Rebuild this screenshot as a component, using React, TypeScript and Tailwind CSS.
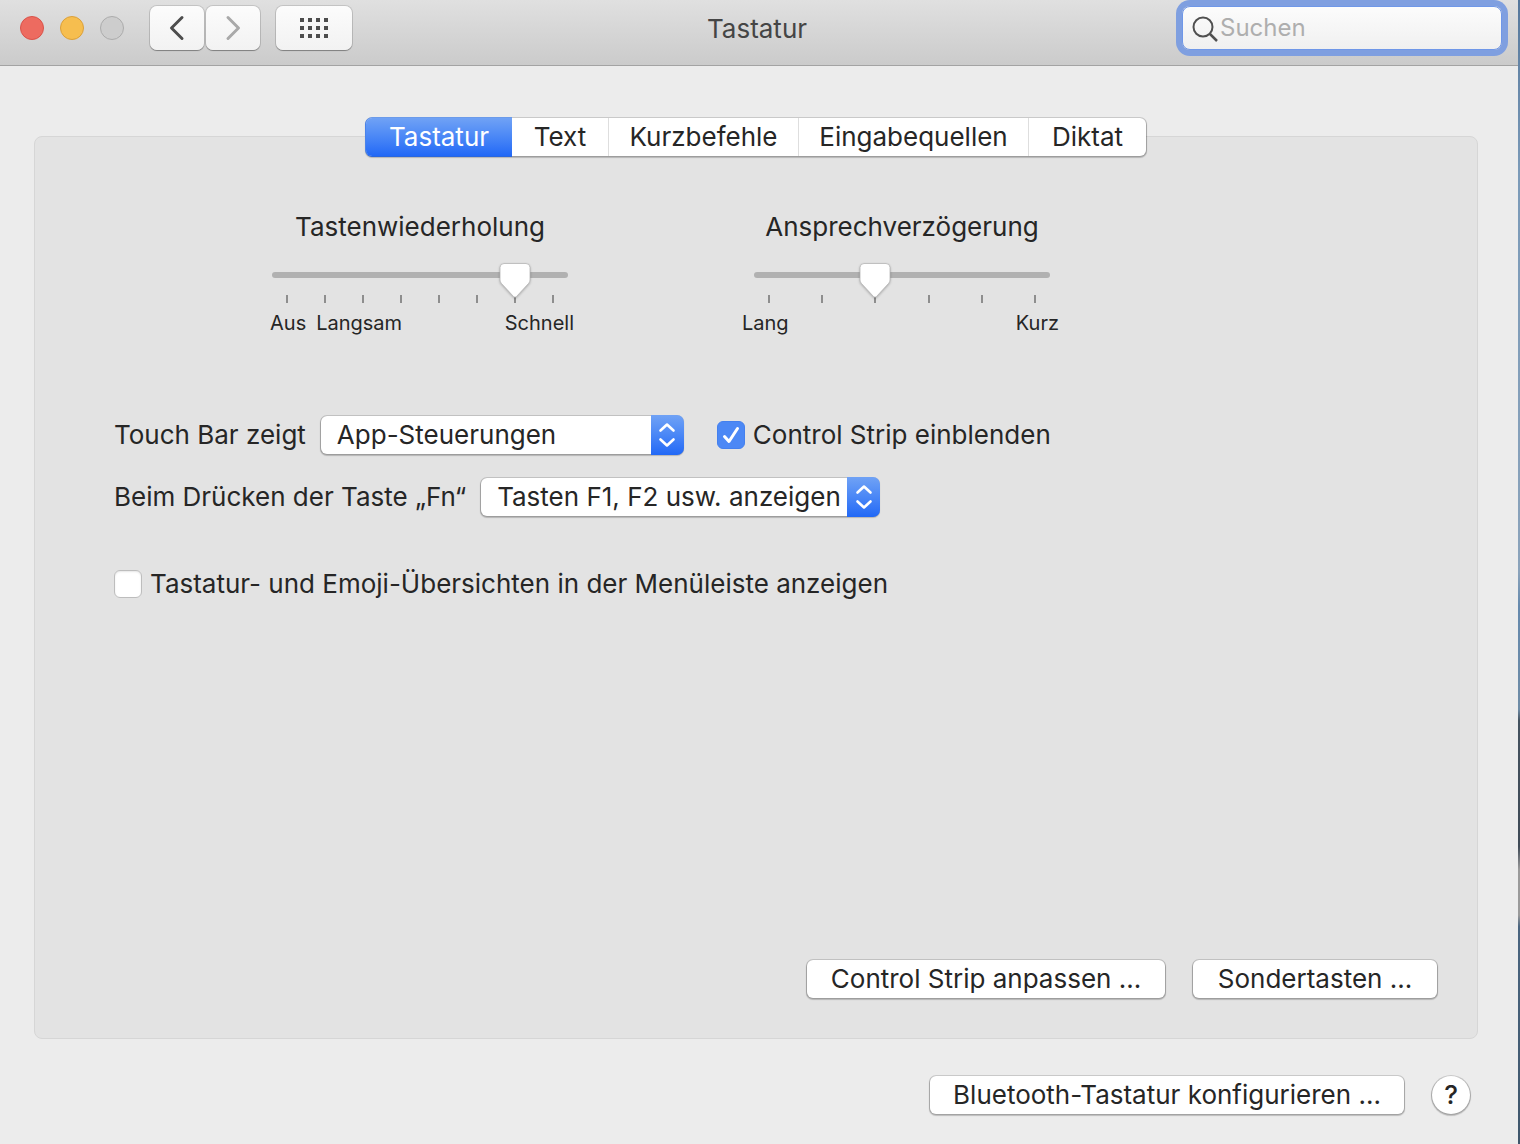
import { useState } from "react";
import type { ReactNode } from "react";

const tabs = [
  { label: "Tastatur", width: "w-[146px]" },
  { label: "Text", width: "w-[97px]" },
  { label: "Kurzbefehle", width: "w-[190px]" },
  { label: "Eingabequellen", width: "w-[230px]" },
  { label: "Diktat", width: "w-[117px]" },
];

const raised =
  "bg-white shadow-[0_0_0_1px_rgba(0,0,0,0.13),0_1px_1px_1px_rgba(0,0,0,0.2)]";

function ToolbarButton({ label, className, children }: { label: string; className: string; children: ReactNode }) {
  return (
    <button
      aria-label={label}
      className={`flex h-11 items-center justify-center rounded-[7px] bg-gradient-to-b from-[#fcfcfc] to-[#f2f2f2] shadow-[0_0_0_1px_rgba(0,0,0,0.12),0_1px_1px_rgba(0,0,0,0.3)] ${className}`}
    >
      {children}
    </button>
  );
}

function Toolbar() {
  return (
    <header className="grid h-[66px] grid-cols-[1fr_auto_1fr] items-start border-b border-[#a3a3a3] bg-gradient-to-b from-[#e0e0e0] to-[#cbcbcb] pt-[6px] pr-4 pl-3">
      <div className="flex h-11 items-center pl-2">
        <div className="flex gap-4">
          <button aria-label="Schließen" className="size-6 rounded-full border border-[#d9534a] bg-[#ed6b60]" />
          <button aria-label="Minimieren" className="size-6 rounded-full border border-[#dba03a] bg-[#f6be4f]" />
          <button aria-label="Zoomen" className="size-6 rounded-full border border-[#acacac] bg-[#cdcdcd]" />
        </div>
        <ToolbarButton label="Zurück" className="ml-[26px] w-[54px]">
          <svg width="16" height="26" viewBox="0 0 16 26" fill="none" stroke="#4d4d4d" strokeWidth="3" strokeLinecap="round" strokeLinejoin="round">
            <path d="M13 2.500 2.500 13 13 23.500" />
          </svg>
        </ToolbarButton>
        <ToolbarButton label="Vorwärts" className="ml-[2px] w-[54px]">
          <svg width="16" height="26" viewBox="0 0 16 26" fill="none" stroke="#a9a9a9" strokeWidth="3" strokeLinecap="round" strokeLinejoin="round">
            <path d="M3 2.500 13.500 13 3 23.500" />
          </svg>
        </ToolbarButton>
        <ToolbarButton label="Alle einblenden" className="ml-4 w-[76px]">
          <svg width="28" height="20" viewBox="0 0 28 20" fill="#4d4d4d">
            {[0, 8, 16].map((y) => [0, 8, 16, 24].map((x) => <rect key={`${x}-${y}`} x={x} y={y} width="4" height="4" />))}
          </svg>
        </ToolbarButton>
      </div>
      <h1 className="flex h-[46px] items-center text-[26px] text-[#454545]">Tastatur</h1>
      <div className="relative w-[320px] justify-self-end">
        <svg className="pointer-events-none absolute top-[10px] left-[10px]" width="28" height="28" viewBox="0 0 28 28" fill="none" stroke="#505050" strokeWidth="2">
          <circle cx="11" cy="11" r="9.500" />
          <path d="m18 18 7 7" strokeWidth="2.500" />
        </svg>
        <input
          type="search"
          aria-label="Suchen"
          placeholder="Suchen"
          className="block h-11 w-full rounded-[8px] border border-[#6f97e8] bg-gradient-to-b from-[#fcfcfc] to-[#f0f0f0] pr-3 pb-[2px] pl-[37px] text-[24px] text-[#262626] shadow-[0_0_0_6px_#7f9fe0] outline-none placeholder:text-[#aeaeae]"
        />
      </div>
    </header>
  );
}

type SliderProps = {
  id: string;
  title: string;
  steps: number;
  start: number;
  children: ReactNode;
};

function Slider({ id, title, steps, start, children }: SliderProps) {
  const [value, setValue] = useState(start);

  return (
    <div className="flex w-[296px] flex-col">
      <label htmlFor={id} className="text-center leading-8 whitespace-nowrap">
        {title}
      </label>
      <div className="relative mt-[19px] h-[49px]">
        <input
          id={id}
          type="range"
          min={0}
          max={steps - 1}
          value={value}
          onChange={(e) => setValue(Number(e.target.value))}
          className="mt-[10px] block h-[6px] w-full appearance-none rounded-full bg-[#b1b1b1] outline-none [&::-webkit-slider-thumb]:h-8 [&::-webkit-slider-thumb]:w-[30px] [&::-webkit-slider-thumb]:appearance-none [&::-webkit-slider-thumb]:bg-transparent"
        />
        <div className="mt-[17px] flex justify-between px-[14px]">
          {Array.from({ length: steps }, (_, i) => (
            <span key={i} className="h-2 w-[2px] bg-[#8e8e8e]" />
          ))}
        </div>
        <svg
          className="pointer-events-none absolute top-0 -ml-[2px] drop-shadow-[0_1px_1px_rgba(0,0,0,0.25)]"
          style={{ left: `calc((100% - 30px) * ${value / (steps - 1)})` }}
          width="34"
          height="38"
          viewBox="0 0 34 38"
        >
          <path d="M6 1.500h22q4 0 4 4V18q0 2-1.500 3.500L18.500 34.500q-1.500 1.500-3 0L3.500 21.500Q2 20 2 18V5.500q0-4 4-4Z" fill="#fff" stroke="#b5b5b5" strokeWidth=".8" />
        </svg>
      </div>
      {children}
    </div>
  );
}

function Popup({ id, width, options }: { id: string; width: string; options: string[] }) {
  return (
    <div className={`relative ${width}`}>
      <select id={id} className={`block h-[38px] w-full appearance-none rounded-[6px] pr-8 pl-4 outline-none ${raised}`}>
        {options.map((o) => (
          <option key={o}>{o}</option>
        ))}
      </select>
      <span className="pointer-events-none absolute -top-px -right-px flex h-10 w-[33px] items-center justify-center rounded-r-[7px] bg-gradient-to-b from-[#70a2f5] to-[#2168f6]">
        <svg width="18" height="26" viewBox="0 0 18 26" fill="none" stroke="#fff" strokeWidth="2.600" strokeLinecap="round" strokeLinejoin="round">
          <path d="m2.500 8.500 6.500-6 6.500 6M2.500 17.500l6.500 6 6.500-6" />
        </svg>
      </span>
    </div>
  );
}

function Checkbox({ id, label, initial }: { id: string; label: string; initial: boolean }) {
  const [checked, setChecked] = useState(initial);

  return (
    <div className="flex items-center gap-2">
      <div className="relative size-7">
        <input
          id={id}
          type="checkbox"
          checked={checked}
          onChange={(e) => setChecked(e.target.checked)}
          className="block size-7 appearance-none rounded-[6px] border border-[#bdbdbd] bg-white shadow-[inset_0_1px_2px_rgba(0,0,0,0.1)] checked:border-[#4480ee] checked:bg-[#4c88f5] checked:shadow-none"
        />
        {checked && (
          <svg className="pointer-events-none absolute inset-0" width="28" height="28" viewBox="0 0 28 28" fill="none" stroke="#fff" strokeWidth="3" strokeLinecap="round" strokeLinejoin="round">
            <path d="m7.500 15.500 4.500 5 8.500-13" />
          </svg>
        )}
      </div>
      <label htmlFor={id}>{label}</label>
    </div>
  );
}

function PushButton({ width, children }: { width: string; children: ReactNode }) {
  return <button className={`h-[38px] rounded-[6px] whitespace-nowrap ${width} ${raised}`}>{children}</button>;
}

export default function App() {
  const [active, setActive] = useState("Tastatur");

  return (
    <div className="flex min-h-screen font-[Inter,'Liberation_Sans',sans-serif] text-[26px] leading-8 text-[#262626]">
      <div className="flex flex-1 flex-col bg-[#ececec]">
        <Toolbar />

        <main className="flex flex-1 flex-col pt-[52px] pr-10 pb-[30px] pl-[34px]">
          <nav className="relative z-10 -mb-5 flex justify-center">
            <div className={`flex h-[38px] rounded-[6px] ${raised}`}>
              {tabs.map((tab) => (
                <button
                  key={tab.label}
                  onClick={() => setActive(tab.label)}
                  className={`first:rounded-l-[6px] last:rounded-r-[6px] ${tab.width} ${
                    active === tab.label
                      ? "bg-gradient-to-b from-[#70a2f5] to-[#2168f6] text-white shadow-[-1px_0_#4a83ea,0_-1px_#6c9bea,0_1px_#2a66dd]"
                      : "border-r border-[#dedede] last:border-r-0"
                  }`}
                >
                  {tab.label}
                </button>
              ))}
            </div>
          </nav>

          <section className="flex flex-1 flex-col rounded-[8px] border border-[#d6d6d6] bg-[#e3e3e3] pt-[74px] pr-10 pb-10 pl-[79px]">
            <div className="flex gap-[186px] pl-[158px]">
              <Slider id="repeat" title="Tastenwiederholung" steps={8} start={6}>
                <div className="-mr-[6px] -ml-[2px] flex text-[20px] leading-6">
                  <span>Aus</span>
                  <span className="ml-[10px]">Langsam</span>
                  <span className="ml-auto">Schnell</span>
                </div>
              </Slider>
              <Slider id="delay" title="Ansprechverzögerung" steps={6} start={2}>
                <div className="-mr-[9px] -ml-3 flex justify-between text-[20px] leading-6">
                  <span>Lang</span>
                  <span>Kurz</span>
                </div>
              </Slider>
            </div>

            <div className="mt-[81px] flex items-center">
              <label htmlFor="touchbar">Touch Bar zeigt</label>
              <div className="mr-[34px] ml-[15px]">
                <Popup id="touchbar" width="w-[362px]" options={["App-Steuerungen", "Erweiterte Control Strip", "F1, F2 usw. Tasten"]} />
              </div>
              <Checkbox id="strip" label="Control Strip einblenden" initial={true} />
            </div>

            <div className="mt-6 flex items-center">
              <label htmlFor="fn">Beim Drücken der Taste „Fn“</label>
              <div className="ml-[15px]">
                <Popup id="fn" width="w-[398px]" options={["Tasten F1, F2 usw. anzeigen", "Control Strip erweitern"]} />
              </div>
            </div>

            <div className="mt-[52px]">
              <Checkbox id="emoji" label="Tastatur- und Emoji-Übersichten in der Menüleiste anzeigen" initial={false} />
            </div>

            <div className="mt-auto flex justify-end gap-7">
              <PushButton width="w-[358px]">Control Strip anpassen ...</PushButton>
              <PushButton width="w-[244px]">Sondertasten ...</PushButton>
            </div>
          </section>

          <footer className="mt-[37px] flex items-center justify-end gap-7 pr-2">
            <PushButton width="w-[474px]">Bluetooth-Tastatur konfigurieren ...</PushButton>
            <button aria-label="Hilfe" className={`size-[38px] rounded-full font-medium ${raised}`}>
              ?
            </button>
          </footer>
        </main>
      </div>

      {/* desktop behind the window */}
      <div className="w-[2px] bg-linear-[to_bottom,#56779b_0%,#7b9ab8_15%,#8ba3bb_50%,#6589ad_53%,#6f8ca6_62%,#44525f_63%,#3f4a56_74%,#9a9a9a_76%,#9a9a9a_80%,#4a6580_81%,#3f566b_100%]" />
    </div>
  );
}
